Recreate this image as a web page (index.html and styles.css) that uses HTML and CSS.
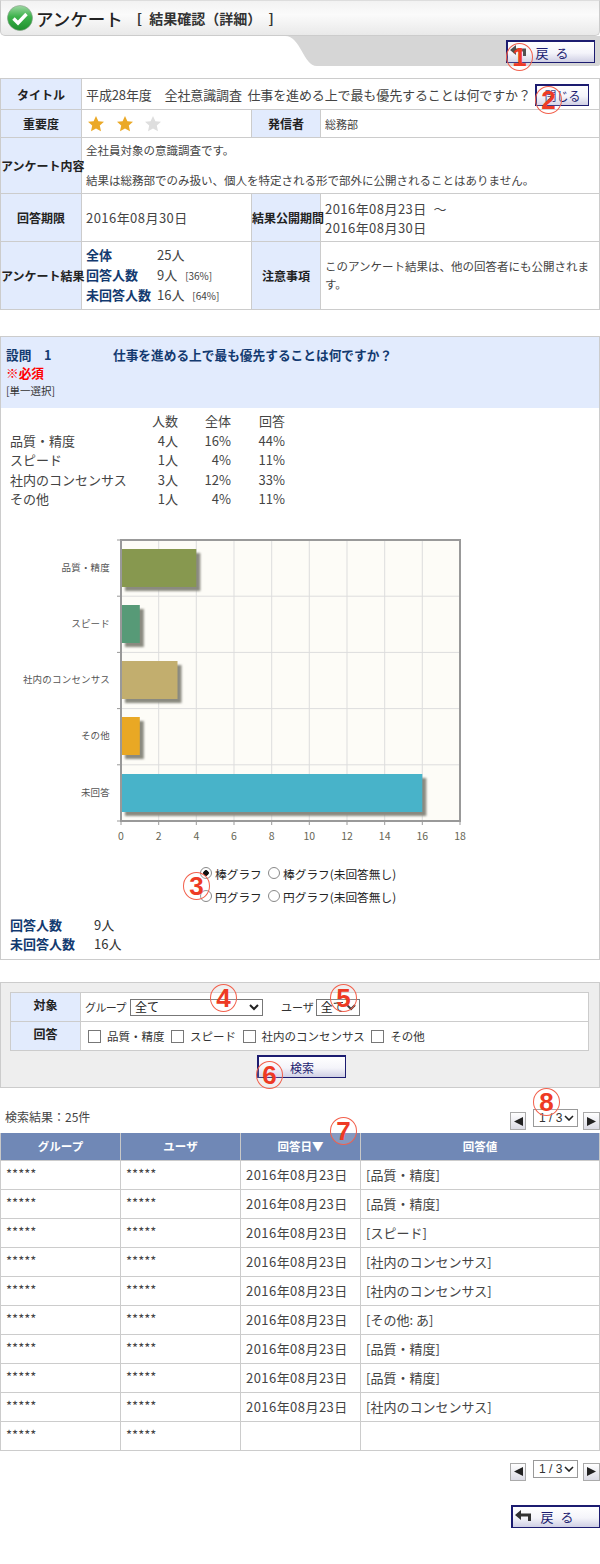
FILE: index.html
```html
<!DOCTYPE html>
<html lang="ja">
<head>
<meta charset="utf-8">
<title>アンケート</title>
<link rel="stylesheet" href="styles.css">
</head>
<body>
<div class="page">
  <header class="title-bar">
    <svg class="title-icon" width="26" height="26" viewBox="0 0 26 26"><defs><linearGradient id="g" x1="0" y1="0" x2="0" y2="1"><stop offset="0" stop-color="#9fd8a4"/><stop offset=".45" stop-color="#3db24b"/><stop offset="1" stop-color="#1f8f2e"/></linearGradient></defs><circle cx="13" cy="13" r="12.5" fill="url(#g)" stroke="#8a9a8a" stroke-width=".6"/><path d="M6.5 13.5l4.5 4.5 8.5-9" fill="none" stroke="#fff" stroke-width="3.4"/></svg>
    <h1 class="title-main">アンケート</h1>
    <span class="title-sub">[ 結果確認（詳細） ]</span>
  </header>
  <div class="tab"><button class="btn btn-back"><svg class="back-arrow" width="16" height="11" viewBox="0 0 16 11"><path d="M0 5L6 0V3.500H16V11H13V6.500H6V10z" fill="#333"/></svg><span>戻 る</span></button></div>

  <table class="info">
    <colgroup><col class="c1"><col class="c2"><col class="c3"><col class="c4"></colgroup>
    <tr class="r1"><th>タイトル</th><td colspan="3"><div class="title-row"><span>平成28年度　全社意識調査&nbsp; 仕事を進める上で最も優先することは何ですか？</span><button class="btn btn-close">閉じる</button></div></td></tr>
    <tr class="r2"><th>重要度</th><td><div class="stars">
      <svg width="16" height="16" viewBox="0 0 16 16"><path class="star-on" d="M8 0l2.400 5.200 5.600.6-4.200 3.800 1.200 5.600L8 12.400 3 15.200l1.200-5.600L0 5.800l5.600-.6z"/></svg>
      <svg width="16" height="16" viewBox="0 0 16 16"><path class="star-on" d="M8 0l2.400 5.200 5.600.6-4.200 3.800 1.200 5.600L8 12.400 3 15.200l1.200-5.600L0 5.800l5.600-.6z"/></svg>
      <svg width="16" height="16" viewBox="0 0 16 16"><path class="star-off" d="M8 0l2.400 5.200 5.600.6-4.200 3.800 1.200 5.600L8 12.400 3 15.200l1.200-5.600L0 5.800l5.600-.6z"/></svg>
    </div></td><th>発信者</th><td class="small">総務部</td></tr>
    <tr class="r3"><th>アンケート内容</th><td colspan="3" class="memo">全社員対象の意識調査です。<br><br>結果は総務部でのみ扱い、個人を特定される形で部外に公開されることはありません。</td></tr>
    <tr class="r4"><th>回答期限</th><td class="date">2016年08月30日</td><th>結果公開期間</th><td class="date dates">2016年08月23日 &nbsp;～<br>2016年08月30日</td></tr>
    <tr class="r5"><th>アンケート結果</th><td class="result-cell"><div class="result-grid">
      <b>全体</b><span>25人</span>
      <b>回答人数</b><span>9人 <small>[36%]</small></span>
      <b>未回答人数</b><span>16人 <small>[64%]</small></span>
    </div></td><th>注意事項</th><td class="memo notice">このアンケート結果は、他の回答者にも公開されます。</td></tr>
  </table>

  <section class="question">
    <div class="q-head">
      <div class="q-line"><span class="q-no">設問　1</span><span class="q-text">仕事を進める上で最も優先することは何ですか？</span></div>
      <div class="q-req">※必須</div>
      <div class="q-type">[単一選択]</div>
    </div>
    <div class="stats">
      <span></span><span class="n">人数</span><span class="n">全体</span><span class="n">回答</span>
      <span>品質・精度</span><span class="n">4人</span><span class="n">16%</span><span class="n">44%</span>
      <span>スピード</span><span class="n">1人</span><span class="n">4%</span><span class="n">11%</span>
      <span>社内のコンセンサス</span><span class="n">3人</span><span class="n">12%</span><span class="n">33%</span>
      <span>その他</span><span class="n">1人</span><span class="n">4%</span><span class="n">11%</span>
    </div>
    <svg class="chart" width="598" height="334" viewBox="1 517 598 334">
      <defs><filter id="b" x="-20%" y="-20%" width="140%" height="140%"><feGaussianBlur stdDeviation="1"/></filter></defs>
      <rect x="121" y="540" width="339" height="281" fill="#fdfcf7"/>
      <g class="grid">
        <path d="M158.700 540V821M196.300 540V821M234 540V821M271.700 540V821M309.300 540V821M347 540V821M384.700 540V821M422.300 540V821"/>
        <path d="M121 596.200H460M121 652.400H460M121 708.600H460M121 764.800H460"/>
      </g>
      <g class="bar-shadow" filter="url(#b)">
        <rect x="125" y="553" width="75.300" height="38"/><rect x="125" y="609" width="18.800" height="38"/><rect x="125" y="665" width="56.500" height="38"/><rect x="125" y="721" width="18.800" height="38"/><rect x="125" y="778" width="301.300" height="38"/>
      </g>
      <rect x="121" y="549" width="75.300" height="38" fill="#87984f"/>
      <rect x="121" y="605" width="18.800" height="38" fill="#579a77"/>
      <rect x="121" y="661" width="56.500" height="38" fill="#c2ae6e"/>
      <rect x="121" y="717" width="18.800" height="38" fill="#e9a824"/>
      <rect x="121" y="774" width="301.300" height="38" fill="#48b3c9"/>
      <path class="frame" d="M121 540H460V821H121z"/>
      <path class="frame-thin" d="M117 540H121M117 596.200H121M117 652.400H121M117 708.600H121M117 764.800H121M117 821H121M121 821V825M158.700 821V825M196.300 821V825M234 821V825M271.700 821V825M309.300 821V825M347 821V825M384.700 821V825M422.300 821V825M460 821V825"/>
      <g class="cat">
        <text x="110" y="571">品質・精度</text><text x="110" y="627">スピード</text><text x="110" y="683">社内のコンセンサス</text><text x="110" y="739">その他</text><text x="110" y="796">未回答</text>
      </g>
      <g class="val">
        <text x="121" y="840">0</text><text x="158.700" y="840">2</text><text x="196.300" y="840">4</text><text x="234" y="840">6</text><text x="271.700" y="840">8</text><text x="309.300" y="840">10</text><text x="347" y="840">12</text><text x="384.700" y="840">14</text><text x="422.300" y="840">16</text><text x="460" y="840">18</text>
      </g>
    </svg>
    <div class="graph-type">
      <div class="graph-row"><label><input type="radio" name="g" checked>棒グラフ</label><label><input type="radio" name="g">棒グラフ(未回答無し)</label></div>
      <div class="graph-row"><label><input type="radio" name="g">円グラフ</label><label><input type="radio" name="g">円グラフ(未回答無し)</label></div>
    </div>
    <div class="summary"><b>回答人数</b><span>9人</span><b>未回答人数</b><span>16人</span></div>
  </section>

  <section class="search">
    <table class="search-table">
      <tr><th>対象</th><td><div class="filters"><span class="group-label">グループ</span><select class="sel-group"><option>全て</option></select><span class="user-label">ユーザ</span><select class="sel-user"><option>全て</option></select></div></td></tr>
      <tr><th>回答</th><td><div class="checks"><label><input type="checkbox">品質・精度</label><label><input type="checkbox">スピード</label><label><input type="checkbox">社内のコンセンサス</label><label><input type="checkbox">その他</label></div></td></tr>
    </table>
    <div class="search-action"><button class="btn btn-search">検索</button></div>
  </section>

  <div class="result-head">
    <span class="count">検索結果：25件</span>
    <div class="pager"><button class="pg"><svg width="9" height="9" viewBox="0 0 9 9"><path d="M9 0v9L0 4.500z" fill="#222"/></svg></button><select class="pg-sel"><option>1 / 3</option></select><button class="pg"><svg width="9" height="9" viewBox="0 0 9 9"><path d="M0 0v9l9-4.500z" fill="#222"/></svg></button></div>
  </div>
  <table class="list">
    <colgroup><col class="l"><col class="l"><col class="l"><col></colgroup>
    <tr><th>グループ</th><th>ユーザ</th><th>回答日▼</th><th>回答値</th></tr>
    <tr><td class="s">*****</td><td class="s">*****</td><td class="date">2016年08月23日</td><td>[品質・精度]</td></tr>
    <tr><td class="s">*****</td><td class="s">*****</td><td class="date">2016年08月23日</td><td>[品質・精度]</td></tr>
    <tr><td class="s">*****</td><td class="s">*****</td><td class="date">2016年08月23日</td><td>[スピード]</td></tr>
    <tr><td class="s">*****</td><td class="s">*****</td><td class="date">2016年08月23日</td><td>[社内のコンセンサス]</td></tr>
    <tr><td class="s">*****</td><td class="s">*****</td><td class="date">2016年08月23日</td><td>[社内のコンセンサス]</td></tr>
    <tr><td class="s">*****</td><td class="s">*****</td><td class="date">2016年08月23日</td><td>[その他: あ]</td></tr>
    <tr><td class="s">*****</td><td class="s">*****</td><td class="date">2016年08月23日</td><td>[品質・精度]</td></tr>
    <tr><td class="s">*****</td><td class="s">*****</td><td class="date">2016年08月23日</td><td>[品質・精度]</td></tr>
    <tr><td class="s">*****</td><td class="s">*****</td><td class="date">2016年08月23日</td><td>[社内のコンセンサス]</td></tr>
    <tr><td class="s">*****</td><td class="s">*****</td><td></td><td></td></tr>
  </table>
  <div class="pager pager-bottom"><button class="pg"><svg width="9" height="9" viewBox="0 0 9 9"><path d="M9 0v9L0 4.500z" fill="#222"/></svg></button><select class="pg-sel"><option>1 / 3</option></select><button class="pg"><svg width="9" height="9" viewBox="0 0 9 9"><path d="M0 0v9l9-4.500z" fill="#222"/></svg></button></div>
  <div class="foot"><button class="btn btn-back"><svg class="back-arrow" width="16" height="11" viewBox="0 0 16 11"><path d="M0 5L6 0V3.500H16V11H13V6.500H6V10z" fill="#333"/></svg><span>戻 る</span></button></div>

  <span class="mark m1">1</span><span class="mark m2">2</span><span class="mark m3">3</span><span class="mark m4">4</span><span class="mark m5">5</span><span class="mark m6">6</span><span class="mark m7">7</span><span class="mark m8">8</span>
</div>
</body>
</html>
```

FILE: styles.css
```css
* { box-sizing: border-box; }
html, body { margin: 0; padding: 0; background: #fff; }
body { font-family: "Noto Sans CJK JP", "Liberation Sans", sans-serif; font-size: 13px; color: #333; }
.page { position: relative; width: 600px; height: 1564px; overflow: hidden; }
button, input { font-family: inherit; }
select { font-family: "Liberation Sans", "Noto Sans CJK JP", sans-serif; }

.title-bar { display: flex; align-items: center; height: 36px; padding-left: 6px; border: 1px solid #ccc; border-top-color: #ddd; border-radius: 0 0 5px 5px; background: linear-gradient(#f2f2f2, #fbfbfb 40%, #e9e9e9); }
.title-icon { flex: none; }
.title-main { margin: 0 0 0 3px; font-size: 17.500px; font-weight: 500; color: #222; }
.title-sub { margin-left: 14px; font-size: 14px; font-weight: 700; color: #333; word-spacing: 4px; white-space: nowrap; }

.tab { display: flex; justify-content: flex-end; align-items: flex-start; height: 31px; margin-left: 285px; padding: 4px 5px 0 0; background: #d6d6d6; clip-path: path("M0 0H315V28Q315 30 312 30H32C18 30 16 0 0 0Z"); }
.btn { display: inline-flex; align-items: center; justify-content: center; padding: 0; border: 1px solid #1c1c70; border-top-width: 2px; border-left-width: 2px; border-radius: 0; background: linear-gradient(#fff, #f4f4fa 55%, #cfcfe4); color: #1c1c70; font-size: 13px; cursor: pointer; }
.btn-back { position: relative; width: 89px; height: 23px; }
.back-arrow { position: absolute; left: 2px; top: 3px; }
.btn-back span { margin-left: 2px; word-spacing: 4px; }
.btn-close { flex: none; width: 54px; height: 22px; margin-top: 2px; font-size: 12px; }
.btn-search { width: 89px; height: 23px; font-size: 12px; }

.info { width: 600px; height: 231px; margin-top: 11px; border-collapse: collapse; table-layout: fixed; }
.info th, .info td { border: 1px solid #ccc; padding: 0; }
.info th { background: #e2ebfd; font-size: 12px; font-weight: 700; color: #222; text-align: center; white-space: nowrap; }
.info td { padding: 0 4px; font-size: 13px; color: #444; }
.c1 { width: 81px; } .c2 { width: 170px; } .c3 { width: 69px; }
.r1 { height: 31px; } .r2 { height: 28px; } .r3 { height: 56px; } .r4 { height: 48px; } .r5 { height: 68px; }
.title-row { display: flex; justify-content: space-between; align-items: center; padding-right: 6px; white-space: nowrap; font-size: 13px; letter-spacing: -.12px; }
.stars { display: flex; gap: 12.500px; padding-left: 2px; align-items: center; }
.star-on { fill: #eba927; }
.star-off { fill: #dedede; }
.info td.small { font-size: 11px; }
.info td.memo { font-size: 11.500px; line-height: 15px; }
.info td.notice { padding-bottom: 2px; line-height: 18px; }
.date { letter-spacing: .45px; }
.info td.dates { line-height: 19px; }
.result-grid { display: grid; grid-template-columns: 71px 1fr; line-height: 19.500px; }
.result-grid b { color: #133a70; font-size: 13px; white-space: nowrap; }
.result-grid span { white-space: nowrap; }
.result-grid small { margin-left: 5px; font-size: 10px; }

.question { height: 624px; margin-top: 26px; border: 1px solid #ccc; }
.q-head { height: 71px; padding: 9px 5px 0; background: #e2ebfd; }
.q-line { display: flex; font-size: 12.700px; font-weight: 700; color: #133a70; line-height: 18px; }
.q-no { width: 107px; }
.q-req { color: #f00; font-weight: 700; font-size: 12.700px; line-height: 18px; }
.q-type { font-size: 10.500px; line-height: 17px; color: #333; }
.stats { display: grid; grid-template-columns: 113px 55px 53px 54px; grid-auto-rows: 19.500px; margin: 3px 0 0 9px; line-height: 19.500px; white-space: nowrap; color: #444; }
.n { text-align: right; }
.chart { display: block; margin-top: 8px; }
.grid path { stroke: #ddd; fill: none; }
.bar-shadow rect { fill: #8a8a80; }
.frame { fill: none; stroke: #999; stroke-width: 2; }
.frame-thin { fill: none; stroke: #999; }
.cat text { font-size: 9.500px; letter-spacing: .2px; text-anchor: end; fill: #555; }
.val text { font-size: 10.500px; text-anchor: middle; fill: #665; }
.graph-type { display: flex; flex-direction: column; margin: 11px 0 0 199px; font-size: 11.700px; color: #222; line-height: 23px; }
.graph-row { display: flex; gap: 8px; height: 23px; }
.graph-row label { display: inline-flex; align-items: center; white-space: nowrap; }
.graph-row label:first-child { width: 60px; }
.graph-row input { appearance: none; flex: none; width: 12px; height: 12px; margin: 0 3px 0 0; border: 1px solid #888; border-radius: 50%; background: #fff; }
.graph-row input:checked { background: radial-gradient(circle, #111 0 2.500px, #fff 3px); }
.summary { display: grid; grid-template-columns: 84px 1fr; margin: 7px 0 0 9px; line-height: 19.500px; }
.summary b { color: #133a70; }

.search { height: 106px; margin-top: 22px; padding: 9px 10px 10px; border: 1px solid #ccc; background: #eee; }
.search-table { width: 579px; height: 58px; margin-left: -1px; border-collapse: collapse; table-layout: fixed; background: #fff; }
.search-table th, .search-table td { height: 29px; border: 1px solid #ccc; font-size: 12px; }
.search-table th { width: 70px; padding: 0 0 5px; background: #e2ebfd; font-weight: 700; color: #222; }
.search-table td { padding: 0 4px; }
.filters { display: flex; align-items: center; font-size: 11px; }
.group-label { letter-spacing: -.6px; }
.sel-group { width: 133px; height: 17px; margin-left: 4px; padding: 0; border: 1px solid #777; border-radius: 0; background: #fff; font-size: 12px; color: #222; }
.user-label { margin-left: 18px; }
.sel-user { width: 44px; height: 17px; margin-left: 2px; padding: 0; border: 1px solid #777; border-radius: 0; background: #fff; font-size: 12px; color: #222; }
.checks { display: flex; gap: 6.500px; padding-left: 3px; font-size: 11.500px; white-space: nowrap; }
.checks label { display: inline-flex; align-items: center; gap: 6px; }
.checks input { appearance: none; flex: none; width: 13px; height: 13px; margin: 0; border: 1px solid #777; background: #fff; }
.search-action { display: flex; justify-content: center; margin-top: 4px; margin-left: 3px; }

.result-head { display: flex; justify-content: space-between; align-items: flex-start; height: 45px; padding-left: 5px; }
.count { font-size: 12px; margin-top: 20px; color: #444; }
.pager { display: flex; align-items: flex-start; gap: 5px; }
.result-head .pager { margin-top: 21px; }
.pg { display: flex; align-items: center; justify-content: center; width: 17px; height: 18px; margin-top: 3px; padding: 0; border: 1px solid #aaa; background: linear-gradient(#fff, #dcdce6); }
.pg:first-child { width: 16px; margin-right: 2px; }
.pg-sel { appearance: none; width: 45px; height: 18px; padding: 0 0 0 5px; border: 1px solid #999; border-radius: 0; background: #fff url("data:image/svg+xml,%3Csvg xmlns='http://www.w3.org/2000/svg' width='10' height='6'%3E%3Cpath d='M1 1l4 4 4-4' fill='none' stroke='%23222' stroke-width='1.600'/%3E%3C/svg%3E") no-repeat right 3px center; font-size: 12px; color: #333; }
.list { width: 600px; border-collapse: collapse; table-layout: fixed; }
.l { width: 120px; }
.list th { height: 27px; border: 1px solid #c8c8c8; border-top: 0; border-bottom: 0; background: #7088b6; color: #fff; font-size: 11.500px; font-weight: 700; }
.list td { height: 29px; padding: 0 5px; border: 1px solid #ccc; font-size: 13px; color: #444; white-space: nowrap; }
.list td.s { padding-bottom: 3px; }
.pager-bottom { justify-content: flex-end; margin-top: 9px; }
.foot { display: flex; justify-content: flex-end; margin-top: 24px; }

.mark { position: absolute; display: flex; align-items: center; justify-content: center; width: 27px; height: 28px; border: 1px solid #f2604c; border-radius: 50%; background: rgba(255, 255, 255, .15); color: #ee3a24; font-family: "Liberation Sans", sans-serif; font-size: 26px; font-weight: 700; line-height: 1; }
.m1 { left: 506px; top: 43px; } .m2 { left: 535px; top: 86px; } .m3 { left: 183px; top: 872px; } .m4 { left: 210px; top: 984px; }
.m5 { left: 330px; top: 984px; } .m6 { left: 256px; top: 1061px; } .m7 { left: 330px; top: 1117px; } .m8 { left: 533px; top: 1088px; }
```
